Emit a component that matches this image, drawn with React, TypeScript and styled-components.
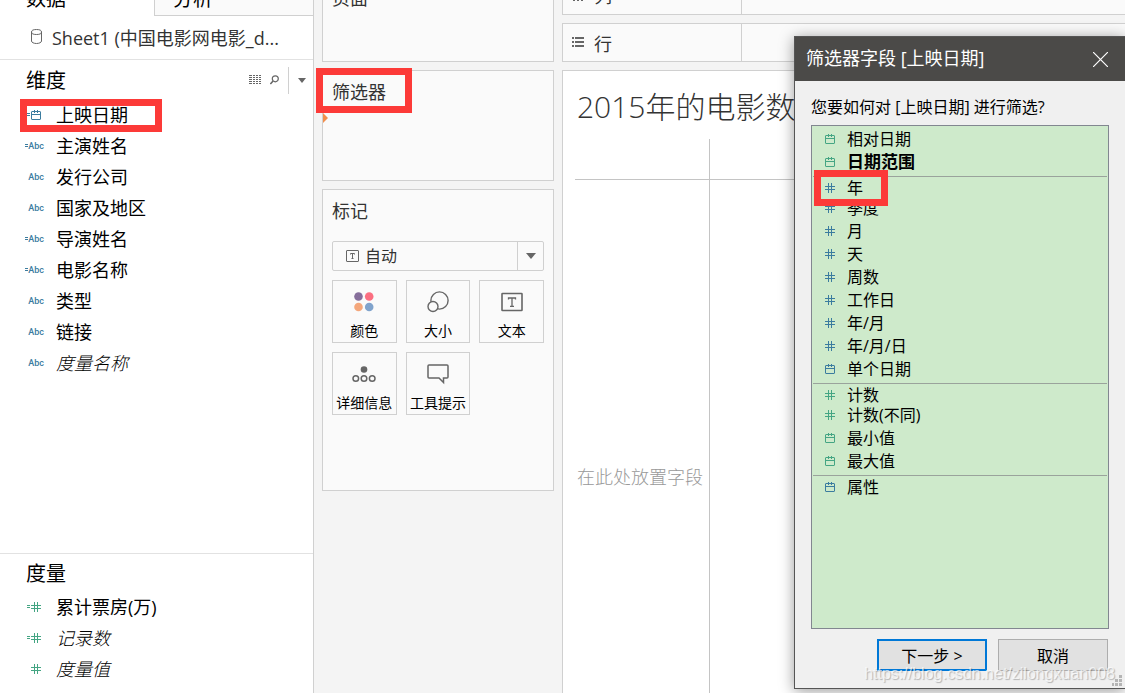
import React from "react";
import styled, { createGlobalStyle, css } from "styled-components";

const BLUE = "#3b7c9f";
const GREEN = "#44a583";
const LINE = "#d0d0d0";
const GREY = "#666";

const GlobalStyle = createGlobalStyle`
  * { box-sizing: border-box; }
  html, body { margin: 0; }
  body {
    background: #f4f4f4;
    color: #000;
    font-family: "Open Sans", "Noto Sans CJK SC", sans-serif;
    font-size: 18px;
  }
  h1, h2, p, ul { margin: 0; padding: 0; font-weight: 400; }
  ul { list-style: none; }
  button, select { font: inherit; color: inherit; margin: 0; }
`;

/* ---------- page ---------- */

const Page = styled.div`
  position: relative;
  display: grid;
  grid-template-columns: 314px 232px minmax(0, 1fr);
  column-gap: 8px;
  height: 100vh;
  min-height: 640px;
  overflow: hidden;
`;

const Highlight = styled.span<{ $inset: string }>`
  position: absolute;
  inset: ${(p) => p.$inset};
  border: 7px solid #fc3a38;
  pointer-events: none;
  z-index: 1;
`;

/* ---------- data pane ---------- */

const DataPane = styled.aside`
  display: flex;
  flex-direction: column;
  background: #fff;
  border-right: 1px solid ${LINE};
`;

const Tabs = styled.div`
  display: grid;
  grid-template-columns: 154px 1fr;
  height: 16px;
  overflow: hidden;
`;

const Tab = styled.button<{ $active?: boolean }>`
  display: flex;
  align-items: flex-end;
  height: 16px;
  padding: 0 0 0 ${(p) => (p.$active ? 26 : 18)}px;
  border: 0;
  background: #fff;
  font-size: 20px;
  line-height: 24px;
  ${(p) =>
    !p.$active &&
    css`
      background: #fafafa;
      border-left: 1px solid ${LINE};
      box-shadow: inset 0 -1px ${LINE};
    `}
  span { padding-bottom: 5px; }
`;

const Source = styled.div`
  display: flex;
  align-items: center;
  gap: 10px;
  height: 44px;
  padding: 0 20px 2px 31px;
  border-bottom: 1px solid #e2e2e2;
  color: #333;
  white-space: nowrap;
`;

const FieldSection = styled.section<{ $grow?: boolean }>`
  flex: ${(p) => (p.$grow ? "1 0 auto" : "0 0 auto")};
  padding-bottom: 8px;
  & + & { border-top: 1px solid #e2e2e2; }
`;

const SectionHead = styled.header<{ $height: number }>`
  display: flex;
  align-items: center;
  justify-content: space-between;
  height: ${(p) => p.$height}px;
  padding: 0 7px 0 26px;
  h2 { padding-top: 2px; font-size: 20px; line-height: 28px; }
`;

const Tools = styled.div`
  display: flex;
  align-items: center;
  gap: 9px;
`;

const ToolButton = styled.button`
  display: flex;
  padding: 0;
  border: 0;
  background: none;
`;

const MenuSlot = styled.div`
  display: flex;
  align-items: center;
  height: 27px;
  padding-left: 9px;
  border-left: 1px solid ${LINE};
`;

const Field = styled.li<{ $italic?: boolean }>`
  position: relative;
  display: flex;
  align-items: center;
  gap: 11px;
  height: 31px;
  padding: 0 0 1px 25px;
  font-style: ${(p) => (p.$italic ? "italic" : "normal")};
  font-weight: ${(p) => (p.$italic ? 300 : 400)};
  line-height: 28px;
`;

const TypeSlot = styled.span<{ $narrow?: boolean }>`
  display: flex;
  align-items: center;
  justify-content: flex-end;
  gap: ${(p) => (p.$narrow ? 1 : 0)}px;
  width: 20px;
  padding-right: ${(p) => (p.$narrow ? 4 : 1)}px;
`;

const Abc = styled.span`
  color: ${BLUE};
  font: 500 9px/12px Roboto, sans-serif;
`;

/* ---------- cards ---------- */

const Cards = styled.div`
  display: flex;
  flex-direction: column;
  gap: 8px;
`;

const Card = styled.section<{ $height: number }>`
  position: relative;
  flex: none;
  height: ${(p) => p.$height}px;
  padding: 8px 9px;
  border: 1px solid ${LINE};
  background: #fafafa;
  color: #333;
  h2 { font-size: 18px; line-height: 26px; }
`;

const PagesCard = styled(Card)`
  display: flex;
  padding: 0 9px;
  border-top: 0;
  overflow: hidden;
  h2 { margin-top: -15px; }
`;

const DropMark = styled.span`
  position: absolute;
  left: 0;
  top: 42px;
  border: 5px solid transparent;
  border-left-color: #f28e4c;
  border-right: 0;
`;

const MarkType = styled.label`
  display: flex;
  align-items: center;
  height: 30px;
  margin: 17px 0 9px;
  padding-left: 13px;
  border: 1px solid ${LINE};
  border-radius: 2px;
  select {
    flex: 1;
    height: 28px;
    padding: 0 0 0 6px;
    border: 0;
    background: none;
    appearance: none;
    font-size: 16px;
  }
`;

const Arrow = styled.span`
  display: flex;
  align-items: center;
  justify-content: center;
  width: 26px;
  height: 28px;
  border-left: 1px solid ${LINE};
`;

const Tiles = styled.div`
  display: grid;
  grid-template-columns: repeat(3, 1fr);
  gap: 9px;
`;

const Tile = styled.button`
  display: flex;
  flex-direction: column;
  align-items: center;
  justify-content: space-between;
  height: 63px;
  padding: 9px 0 0;
  border: 1px solid ${LINE};
  background: #fafafa;
  color: #000;
  font-size: 14px;
  line-height: 22px;
  white-space: nowrap;
`;

/* ---------- view ---------- */

const Main = styled.main`
  display: flex;
  flex-direction: column;
  gap: 8px;
`;

const Shelf = styled.div<{ $cut?: boolean }>`
  flex: none;
  display: flex;
  align-items: ${(p) => (p.$cut ? "flex-end" : "center")};
  height: ${(p) => (p.$cut ? 15 : 39)}px;
  border: solid ${LINE};
  border-width: ${(p) => (p.$cut ? 0 : 1)}px 0 1px 1px;
  background: #fafafa;
  overflow: hidden;
`;

const ShelfName = styled.div`
  display: flex;
  align-items: center;
  gap: 10px;
  flex: none;
  width: 179px;
  height: 38px;
  padding-left: 9px;
  border-right: 1px solid ${LINE};
  color: #333;
`;

const View = styled.section`
  flex: 1;
  display: flex;
  flex-direction: column;
  padding-left: 12px;
  border: solid ${LINE};
  border-width: 1px 0 0 1px;
  background: #fff;
  color: #333;
  h1 {
    padding: 14px 0 10px 2px;
    font-size: 30px;
    font-weight: 300;
    line-height: 44px;
    white-space: nowrap;
  }
`;

const Grid = styled.div`
  flex: 1;
  display: grid;
  grid-template: 41px 1fr / 135px 1fr;
`;

const Cell = styled.div<{ $right?: boolean; $bottom?: boolean }>`
  border: solid #c4c4c4;
  border-width: 0 ${(p) => (p.$right ? 1 : 0)}px ${(p) => (p.$bottom ? 1 : 0)}px 0;
`;

const DropHint = styled.p`
  padding: 284px 0 0 2px;
  color: #999;
  font-weight: 300;
  line-height: 26px;
  white-space: nowrap;
`;

/* ---------- dialog ---------- */

const Dialog = styled.div`
  position: absolute;
  top: 36px;
  right: 0;
  bottom: 4px;
  display: flex;
  flex-direction: column;
  width: 331px;
  border: solid #555;
  border-width: 1px 0 1px 1px;
  background: #f0f0f0;
  box-shadow: 0 2px 14px rgba(0, 0, 0, 0.4);
  font-size: 16px;
`;

const TitleBar = styled.header`
  display: flex;
  align-items: center;
  justify-content: space-between;
  height: 44px;
  padding: 0 17px 0 11px;
  background: #4b4a48;
  color: #fff;
  h2 { padding-bottom: 2px; font-size: 18px; line-height: 26px; }
`;

const Question = styled.p`
  padding: 14px 16px 6px;
  line-height: 24px;
  white-space: nowrap;
`;

const Choices = styled.div`
  flex: 1;
  margin: 0 16px;
  padding: 2px 1px;
  border: 1px solid #828790;
  background: #ceeacb;
`;

const Choice = styled.button<{ $bold?: boolean }>`
  position: relative;
  display: flex;
  align-items: center;
  gap: 12px;
  width: 100%;
  height: 23px;
  padding: 0 0 2px 12px;
  border: 0;
  background: none;
  font-size: ${(p) => (p.$bold ? 17 : 16)}px;
  font-weight: ${(p) => (p.$bold ? 700 : 400)};
  line-height: 20px;
`;

const ChoiceGroup = styled.div`
  & + & {
    margin-top: 2px;
    border-top: 1px solid #9aa39c;
  }
  & + & > ${Choice}:first-child {
    height: 20px;
    padding-top: 1px;
    padding-bottom: 0;
  }
`;

const Footer = styled.footer`
  display: flex;
  justify-content: flex-end;
  gap: 11px;
  padding: 10px 17px 17px;
`;

const DialogButton = styled.button<{ $primary?: boolean }>`
  width: 110px;
  height: 32px;
  padding: 0;
  border: ${(p) => (p.$primary ? "2px solid #0078d7" : "1px solid #adadad")};
  background: #e1e1e1;
`;

const Grip = styled.svg`
  position: absolute;
  right: 3px;
  bottom: 2px;
`;

const Watermark = styled.span`
  position: absolute;
  right: 10px;
  bottom: 9px;
  color: rgba(255, 255, 255, 0.7);
  font: 16px/20px "Liberation Sans", sans-serif;
  text-shadow: 1px 1px 1px rgba(0, 0, 0, 0.25);
  pointer-events: none;
`;

/* ---------- icons ---------- */

type Kind = "abc" | "date" | "num";

const CalendarIcon = ({ color }: { color: string }) => (
  <svg width="10" height="10" viewBox="0 0 10 10" fill="none" stroke={color}>
    <rect x="0.5" y="1.5" width="9" height="8" rx="0.5" />
    <path d="M1 4.5h8M3.5 0v3M6.5 0v3" />
  </svg>
);

const HashIcon = ({ color }: { color: string }) => (
  <svg width="10" height="10" viewBox="0 0 10 10" fill="none" stroke={color}>
    <path d="M0 3.5h10M0 6.5h10M3.5 0v10M6.5 0v10" />
  </svg>
);

const EqualsIcon = ({ color }: { color: string }) => (
  <svg width="3" height="4" viewBox="0 0 3 4" stroke={color}>
    <path d="M0 .5h3M0 2.5h3" />
  </svg>
);

const Caret = ({ size }: { size: number }) => (
  <svg width={size} height={size / 2 + 1} viewBox="0 0 10 6" fill={GREY}>
    <path d="M0 0h10L5 6z" />
  </svg>
);

const TypeIcon = ({ kind, calc }: { kind: Kind; calc?: boolean }) => {
  const color = kind === "num" ? GREEN : BLUE;
  return (
    <TypeSlot $narrow={kind !== "abc"}>
      {calc && <EqualsIcon color={color} />}
      {kind === "abc" && <Abc>Abc</Abc>}
      {kind === "date" && <CalendarIcon color={color} />}
      {kind === "num" && <HashIcon color={color} />}
    </TypeSlot>
  );
};

const DatabaseIcon = () => (
  <svg width="11" height="15" viewBox="0 0 11 15" fill="none" stroke={GREY}>
    <ellipse cx="5.5" cy="3" rx="5" ry="2.5" />
    <path d="M.5 3v9c0 1.4 2.2 2.5 5 2.5s5-1.1 5-2.5V3" />
  </svg>
);

const ListGridIcon = () => (
  <svg width="12" height="10" viewBox="0 0 12 10" stroke={GREY} fill="none">
    {[0.5, 2.5, 4.5, 6.5, 8.5].map((y) => (
      <path key={y} d={`M0 ${y}h3M4 ${y}h2M7 ${y}h2M10 ${y}h2`} />
    ))}
  </svg>
);

const SearchIcon = () => (
  <svg width="9" height="10" viewBox="0 0 9 10" fill="none" stroke={GREY} strokeWidth="1.2">
    <circle cx="5.3" cy="3.8" r="3" />
    <path d="M3.1 6L.4 9" strokeWidth="1.5" />
  </svg>
);

const TextMarkIcon = ({ large }: { large?: boolean }) =>
  large ? (
    <svg width="22" height="24" viewBox="0 0 22 24" fill="none" stroke={GREY}>
      <rect x="1" y="3.5" width="20" height="17" rx="0.5" strokeWidth="1.6" />
      <path d="M7.500 9.500V8h7v1.500M11 8v8M9 16.300h4" strokeWidth="1.3" />
    </svg>
  ) : (
    <svg width="13" height="12" viewBox="0 0 13 12" fill="none" stroke={GREY}>
      <rect x="0.5" y="0.5" width="12" height="11" rx="0.5" />
      <path d="M4.500 4.500v-1h4v1M6.500 3.500v5M5.500 8.500h2" />
    </svg>
  );

const ColorIcon = () => (
  <svg width="20" height="24" viewBox="0 0 20 24">
    <circle cx="4.5" cy="6.500" r="4.3" fill="#866f9b" />
    <circle cx="15.2" cy="6.500" r="4.3" fill="#fb6f81" />
    <circle cx="4.5" cy="17" r="4.3" fill="#f4a77c" />
    <circle cx="15.2" cy="17" r="4.3" fill="#80a3cc" />
  </svg>
);

const SizeIcon = () => (
  <svg width="24" height="24" viewBox="0 0 24 24" fill="#fafafa" stroke={GREY} strokeWidth="1.4">
    <circle cx="13.5" cy="10.5" r="8.6" />
    <circle cx="7" cy="16.5" r="5" />
  </svg>
);

const DetailIcon = () => (
  <svg width="24" height="24" viewBox="0 0 24 24" fill="none" stroke={GREY} strokeWidth="1.5">
    <circle cx="12" cy="7.5" r="3.3" fill={GREY} stroke="none" />
    <circle cx="3.8" cy="16.5" r="2.8" />
    <circle cx="12" cy="16.5" r="2.8" />
    <circle cx="20.2" cy="16.5" r="2.8" />
  </svg>
);

const TooltipIcon = () => (
  <svg width="22" height="24" viewBox="0 0 22 24" fill="none" stroke={GREY} strokeWidth="1.5">
    <path d="M2 3h18q1 0 1 1v11q0 1-1 1h-3.500v4.500L12 16H2q-1 0-1-1V4q0-1 1-1z" />
  </svg>
);

const RowsIcon = () => (
  <svg width="12" height="11" viewBox="0 0 12 11" fill={GREY}>
    <path d="M0 0h2v2H0zM3 0h9v2H3zM0 4h2v2H0zM3 4h9v2H3zM0 8h2v2H0zM3 8h9v2H3z" />
  </svg>
);

const ColumnsIcon = () => (
  <svg width="12" height="11" viewBox="0 0 12 11" fill={GREY}>
    <path d="M1 0h2v2H1zM1 3h2v8H1zM5 0h2v2H5zM5 3h2v8H5zM9 0h2v2H9zM9 3h2v8H9z" />
  </svg>
);

/* ---------- data ---------- */

type FieldInfo = { name: string; kind: Kind; calc?: boolean; italic?: boolean; marked?: boolean };

const dimensions: FieldInfo[] = [
  { name: "上映日期", kind: "date", calc: true, marked: true },
  { name: "主演姓名", kind: "abc", calc: true },
  { name: "发行公司", kind: "abc" },
  { name: "国家及地区", kind: "abc" },
  { name: "导演姓名", kind: "abc", calc: true },
  { name: "电影名称", kind: "abc", calc: true },
  { name: "类型", kind: "abc" },
  { name: "链接", kind: "abc" },
  { name: "度量名称", kind: "abc", italic: true },
];

const measures: FieldInfo[] = [
  { name: "累计票房(万)", kind: "num", calc: true },
  { name: "记录数", kind: "num", calc: true, italic: true },
  { name: "度量值", kind: "num", italic: true },
];

type ChoiceInfo = { name: string; kind: "date" | "num"; color: string; bold?: boolean; marked?: boolean };

const groups: ChoiceInfo[][] = [
  [
    { name: "相对日期", kind: "date", color: GREEN },
    { name: "日期范围", kind: "date", color: GREEN, bold: true },
  ],
  [
    { name: "年", kind: "num", color: BLUE, marked: true },
    { name: "季度", kind: "num", color: BLUE },
    { name: "月", kind: "num", color: BLUE },
    { name: "天", kind: "num", color: BLUE },
    { name: "周数", kind: "num", color: BLUE },
    { name: "工作日", kind: "num", color: BLUE },
    { name: "年/月", kind: "num", color: BLUE },
    { name: "年/月/日", kind: "num", color: BLUE },
    { name: "单个日期", kind: "date", color: BLUE },
  ],
  [
    { name: "计数", kind: "num", color: GREEN },
    { name: "计数(不同)", kind: "num", color: GREEN },
    { name: "最小值", kind: "date", color: GREEN },
    { name: "最大值", kind: "date", color: GREEN },
  ],
  [{ name: "属性", kind: "date", color: BLUE }],
];

const tiles = [
  { name: "颜色", icon: <ColorIcon /> },
  { name: "大小", icon: <SizeIcon /> },
  { name: "文本", icon: <TextMarkIcon large /> },
  { name: "详细信息", icon: <DetailIcon /> },
  { name: "工具提示", icon: <TooltipIcon /> },
];

const FieldList = ({ fields }: { fields: FieldInfo[] }) => (
  <ul>
    {fields.map((f) => (
      <Field key={f.name} $italic={f.italic}>
        <TypeIcon kind={f.kind} calc={f.calc} />
        {f.name}
        {f.marked && <Highlight $inset="-1px 151px -1px 20px" />}
      </Field>
    ))}
  </ul>
);

export default function App() {
  return (
    <>
      <GlobalStyle />
      <Page>
        <DataPane>
          <Tabs>
            <Tab $active><span>数据</span></Tab>
            <Tab><span>分析</span></Tab>
          </Tabs>
          <Source>
            <DatabaseIcon />
            Sheet1 (中国电影网电影_d...
          </Source>
          <FieldSection $grow>
            <SectionHead $height={40}>
              <h2>维度</h2>
              <Tools>
                <ToolButton aria-label="查看数据"><ListGridIcon /></ToolButton>
                <ToolButton aria-label="查找字段"><SearchIcon /></ToolButton>
                <MenuSlot>
                  <ToolButton aria-label="菜单"><Caret size={8} /></ToolButton>
                </MenuSlot>
              </Tools>
            </SectionHead>
            <FieldList fields={dimensions} />
          </FieldSection>
          <FieldSection>
            <SectionHead $height={38}><h2>度量</h2></SectionHead>
            <FieldList fields={measures} />
          </FieldSection>
        </DataPane>

        <Cards>
          <PagesCard $height={62}><h2>页面</h2></PagesCard>
          <Card $height={111}>
            <h2>筛选器</h2>
            <DropMark />
            <Highlight $inset="-3px 141px 67px -7px" />
          </Card>
          <Card $height={302}>
            <h2>标记</h2>
            <MarkType>
              <TextMarkIcon />
              <select aria-label="标记类型"><option>自动</option></select>
              <Arrow><Caret size={10} /></Arrow>
            </MarkType>
            <Tiles>
              {tiles.map((t) => (
                <Tile key={t.name}>{t.icon}{t.name}</Tile>
              ))}
            </Tiles>
          </Card>
        </Cards>

        <Main>
          <Shelf $cut><ShelfName><ColumnsIcon />列</ShelfName></Shelf>
          <Shelf><ShelfName><RowsIcon />行</ShelfName></Shelf>
          <View>
            <h1>2015年的电影数据</h1>
            <Grid>
              <Cell $right $bottom />
              <Cell $bottom />
              <Cell $right><DropHint>在此处放置字段</DropHint></Cell>
              <Cell />
            </Grid>
          </View>
        </Main>

        <Dialog role="dialog" aria-labelledby="dialog-title">
          <TitleBar>
            <h2 id="dialog-title">筛选器字段 [上映日期]</h2>
            <ToolButton aria-label="关闭">
              <svg width="15" height="15" viewBox="0 0 15 15" stroke="#fff" strokeWidth="1.2">
                <path d="M0 0l15 15M15 0L0 15" />
              </svg>
            </ToolButton>
          </TitleBar>
          <Question>您要如何对 [上映日期] 进行筛选?</Question>
          <Choices>
            {groups.map((group) => (
              <ChoiceGroup key={group[0].name}>
                {group.map((c) => (
                  <Choice key={c.name} $bold={c.bold}>
                    {c.kind === "date" ? <CalendarIcon color={c.color} /> : <HashIcon color={c.color} />}
                    {c.name}
                    {c.marked && <Highlight $inset="-7px 219px -9px 1px" />}
                  </Choice>
                ))}
              </ChoiceGroup>
            ))}
          </Choices>
          <Footer>
            <DialogButton $primary>下一步 &gt;</DialogButton>
            <DialogButton>取消</DialogButton>
          </Footer>
          <Grip width="10" height="11" viewBox="0 0 10 11" fill="#b5b5b5">
            <path d="M7 0h3v3H7zM7 4h3v3H7zM7 8h3v3H7zM3 4h3v3H3zM3 8h3v3H3zM0 8h2v3H0z" />
          </Grip>
        </Dialog>
        <Watermark>https://blog.csdn.net/zilongxuan008</Watermark>
      </Page>
    </>
  );
}
